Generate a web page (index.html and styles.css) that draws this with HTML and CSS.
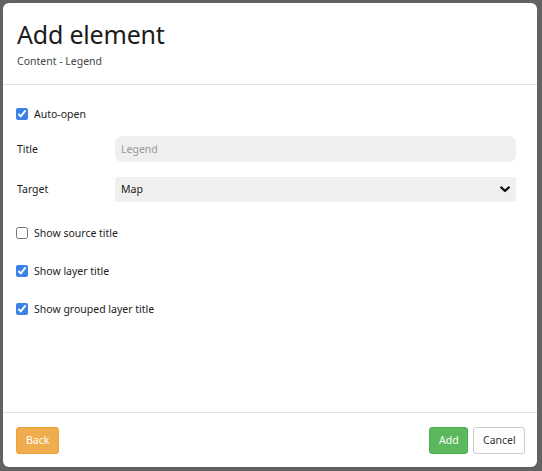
FILE: index.html
```html
<!DOCTYPE html>
<html>
<head>
<meta charset="utf-8">
<link rel="stylesheet" href="styles.css">
</head>
<body>
<div class="backdrop">
  <div class="modal">
    <div class="modal-header">
      <h1 class="modal-title">Add element</h1>
      <div class="modal-subtitle">Content - Legend</div>
    </div>
    <div class="modal-body">
      <label class="check-row first"><input type="checkbox" checked><span>Auto-open</span></label>
      <div class="field-row">
        <span class="field-label">Title</span>
        <input class="field-input" type="text" placeholder="Legend">
      </div>
      <div class="field-row">
        <span class="field-label">Target</span>
        <div class="field-select">
          <span>Map</span>
          <svg class="chev" width="10" height="7" viewBox="0 0 10 7"><path d="M1.2 1.4 L5 5 L8.8 1.4" fill="none" stroke="#111" stroke-width="2.2" stroke-linecap="round" stroke-linejoin="round"/></svg>
        </div>
      </div>
      <label class="check-row gap-top"><input type="checkbox"><span>Show source title</span></label>
      <label class="check-row"><input type="checkbox" checked><span>Show layer title</span></label>
      <label class="check-row last"><input type="checkbox" checked><span>Show grouped layer title</span></label>
    </div>
    <div class="modal-footer">
      <button class="btn btn-back">Back</button>
      <div class="spacer"></div>
      <button class="btn btn-add">Add</button>
      <button class="btn btn-cancel">Cancel</button>
    </div>
  </div>
</div>
</body>
</html>
```
FILE: styles.css
```css
* { box-sizing: border-box; }
html, body { margin: 0; padding: 0; }
body {
  width: 542px;
  height: 471px;
  overflow: hidden;
  font-family: "Noto Sans", "Open Sans", sans-serif;
  color: #222;
}
.backdrop {
  width: 542px;
  height: 471px;
  background: #626262;
  padding: 3px 5px 4px 3px;
}
.modal {
  background: #fff;
  border-radius: 6px;
  height: 464px;
  display: flex;
  flex-direction: column;
}
.modal-header {
  height: 82px;
  border-bottom: 1px solid #e2e2e2;
  padding: 15px 0 0 14px;
}
.modal-title {
  margin: 0;
  font-size: 25px;
  font-weight: 400;
  line-height: 32px;
  color: #1c1c1c;
  letter-spacing: -0.2px;
}
.modal-subtitle {
  font-size: 10.5px;
  color: #444;
  margin-top: 4px;
}
.modal-body {
  flex: 1;
  padding: 21px 21px 0 13px;
}
.check-row {
  display: flex;
  align-items: center;
  gap: 6px;
  font-size: 10.5px;
  height: 16px;
  margin-bottom: 22px;
}
.check-row.first { margin-bottom: 14px; }
.check-row.gap-top { margin-top: 23px; }
.check-row.last { margin-top: 1px; }
.check-row input {
  margin: 0;
  width: 12px;
  height: 12px;
  accent-color: #3a82e8;
}
.field-row {
  display: flex;
  align-items: center;
  height: 26px;
  margin-bottom: 14px;
}
.field-label {
  width: 99px;
  padding-left: 1px;
  font-size: 10.5px;
}
.field-input {
  flex: 1;
  height: 26px;
  border: none;
  background: #efefef;
  border-radius: 7px;
  padding: 0 6px;
  font-family: inherit;
  font-size: 10.5px;
  outline: none;
}
.field-input::placeholder { color: #999; }
.field-select {
  flex: 1;
  height: 25px;
  background: #efefef;
  border-radius: 3px;
  display: flex;
  align-items: center;
  justify-content: space-between;
  padding: 0 6px 0 6px;
  font-size: 10.5px;
}
.modal-footer {
  height: 55px;
  border-top: 1px solid #e2e2e2;
  display: flex;
  align-items: center;
  padding: 0 12px 0 13px;
  gap: 5px;
}
.spacer { flex: 1; }
.btn {
  height: 27px;
  border-radius: 3px;
  font-family: inherit;
  font-size: 10.5px;
  padding: 0 9px;
  cursor: pointer;
}
.btn-back {
  background: #f0ad4e;
  border: 1px solid #eea236;
  color: #fff;
  width: 43px;
}
.btn-add {
  background: #5cb85c;
  border: 1px solid #4cae4c;
  color: #fff;
  width: 39px;
}
.btn-cancel {
  background: #fff;
  border: 1px solid #ccc;
  color: #333;
  width: 52px;
}
```
